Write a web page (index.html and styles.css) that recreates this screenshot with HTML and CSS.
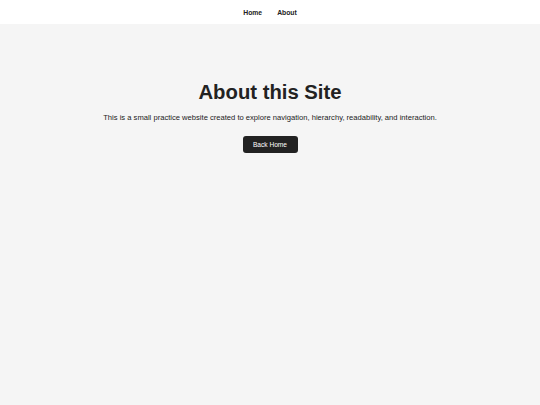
FILE: index.html
```html
<!DOCTYPE html>
<html lang="en">
<head>
<meta charset="utf-8">
<title>About</title>
<link rel="stylesheet" href="styles.css">
</head>
<body>
<header class="nav">
  <a class="nav-link" href="#">Home</a>
  <a class="nav-link" href="#">About</a>
</header>
<main class="content">
  <h1 class="title">About this Site</h1>
  <p class="lead">This is a small practice website created to explore navigation, hierarchy, readability, and interaction.</p>
  <a class="btn" href="#">Back Home</a>
</main>
</body>
</html>
```
FILE: styles.css
```css
html, body {
  margin: 0;
  padding: 0;
  height: 100%;
}
body {
  background: #f5f5f5;
  font-family: "Liberation Sans", Arial, sans-serif;
  color: #222;
}
.nav {
  background: #fff;
  height: 24px;
  display: flex;
  justify-content: center;
  align-items: center;
  gap: 15px;
}
.nav-link {
  font-size: 6.8px;
  font-weight: bold;
  color: #222;
  text-decoration: none;
}
.content {
  display: flex;
  flex-direction: column;
  align-items: center;
  padding-top: 57px;
}
.title {
  margin: 0;
  font-size: 20.3px;
  font-weight: bold;
  color: #222;
}
.lead {
  margin: 9px 0 0;
  font-size: 7.6px;
  color: #222;
}
.btn {
  margin-top: 14px;
  display: flex;
  align-items: center;
  justify-content: center;
  width: 55px;
  height: 17px;
  background: #222;
  color: #fff;
  font-size: 6.6px;
  border-radius: 3px;
  text-decoration: none;
}
```
